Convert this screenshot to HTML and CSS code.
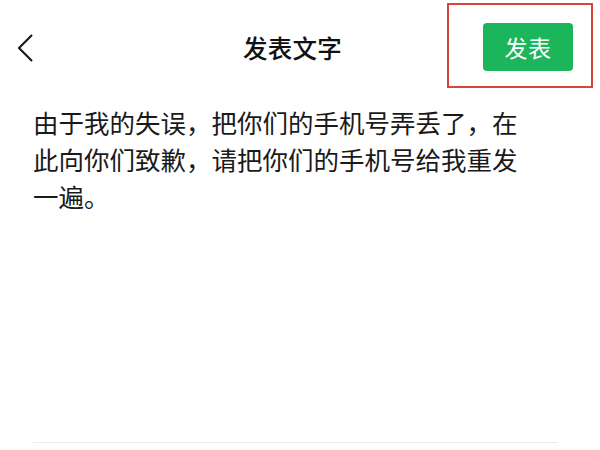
FILE: index.html
```html
<!DOCTYPE html>
<html lang="zh-CN">
<head>
  <meta charset="UTF-8" />
  <meta name="viewport" content="width=device-width, initial-scale=1.0"/>
  <title>发表文字</title>
  <link rel="stylesheet" href="styles.css">
</head>
<body>

  <header class="top-bar">
    <button class="back-btn" aria-label="返回">
      <svg width="20" height="30" viewBox="0 0 20 30">
        <polyline points="14,2 1,15 14,28" fill="none" stroke="#1a1a1a" stroke-width="2.2" stroke-linejoin="miter"/>
      </svg>
    </button>
    <h1 class="title">发表文字</h1>
    <div class="highlight">
      <button class="publish-btn">发表</button>
    </div>
  </header>

  <main class="editor">
    <p class="post-text">由于我的失误，把你们的手机号弄丢了，在此向你们致歉，请把你们的手机号给我重发一遍。</p>
  </main>

</body>
</html>
```

FILE: styles.css
```css
* {
  box-sizing: border-box;
  margin: 0;
  padding: 0;
}

body {
  font-family: "Noto Sans CJK SC", "Noto Sans", sans-serif;
  background-color: #ffffff;
  color: #1a1a1a;
  width: 600px;
  height: 450px;
  overflow: hidden;
}

.top-bar {
  display: grid;
  grid-template-columns: 120px 1fr 146px;
  align-items: center;
  height: 92px;
  padding: 0 7px 0 18px;
}

.back-btn {
  background: none;
  border: none;
  width: 20px;
  height: 30px;
  display: flex;
  margin-top: 3px;
}

.title {
  text-align: center;
  font-size: 24.5px;
  font-weight: 500;
  color: #111111;
  letter-spacing: 0.3px;
  margin-top: 3px;
}

.highlight {
  align-self: start;
  margin-top: 3px;
  height: 85px;
  border: 2px solid #d8433c;
  padding: 18px 18px 0 34px;
}

.publish-btn {
  display: block;
  width: 90px;
  height: 48px;
  border: none;
  border-radius: 4px;
  background-color: #1db55c;
  color: #ffffff;
  font-family: inherit;
  font-size: 23px;
  letter-spacing: 0.5px;
}

.editor {
  margin: 11px 42px 0 33px;
  height: 340px;
  border-bottom: 1px solid #ebebeb;
}

.post-text {
  font-size: 25.5px;
  line-height: 37px;
  width: 492px;
}
```
